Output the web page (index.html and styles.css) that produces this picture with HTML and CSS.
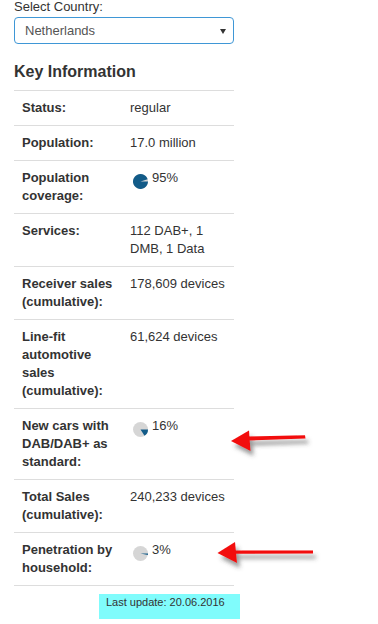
FILE: index.html
```html
<!DOCTYPE html>
<html>
<head>
<meta charset="utf-8">
<link rel="stylesheet" href="styles.css">
</head>
<body>
<div class="page">
  <div class="label">Select Country:</div>
  <div class="select"><span class="select-text">Netherlands</span><span class="caret"></span></div>
  <h3 class="heading">Key Information</h3>
  <table class="info">
    <colgroup><col class="c1"><col class="c2"></colgroup>
    <tr><th>Status:</th><td>regular</td></tr>
    <tr><th>Population:</th><td>17.0 million</td></tr>
    <tr><th>Population coverage:</th><td><svg class="pie" viewBox="0 0 15 15"><circle cx="7.5" cy="7.5" r="7.5" fill="#d6d6d6"/><path d="M7.5 7.5 L15 7.5 A7.5 7.5 0 1 1 14.63 5.18 Z" fill="#125b88"/></svg>95%</td></tr>
    <tr><th>Services:</th><td>112 DAB+, 1 DMB, 1 Data</td></tr>
    <tr><th>Receiver sales (cumulative):</th><td>178,609 devices</td></tr>
    <tr><th>Line-fit automotive sales (cumulative):</th><td>61,624 devices</td></tr>
    <tr><th>New cars with DAB/DAB+ as standard:</th><td><svg class="pie" viewBox="0 0 15 15"><circle cx="7.5" cy="7.5" r="7.5" fill="#d6d6d6"/><path d="M7.5 7.5 L15 7.5 A7.5 7.5 0 0 1 11.52 13.84 Z" fill="#125b88"/></svg>16%</td></tr>
    <tr><th>Total Sales (cumulative):</th><td>240,233 devices</td></tr>
    <tr><th>Penetration by household:</th><td><svg class="pie" viewBox="0 0 15 15"><circle cx="7.5" cy="7.5" r="7.5" fill="#d6d6d6"/><path d="M7.5 7.5 L15 7.5 A7.5 7.5 0 0 1 14.87 8.91 Z" fill="#125b88"/></svg>3%</td></tr>
  </table>
  <div class="update">Last update: 20.06.2016</div>
</div>
<svg class="arrows" width="378" height="624" viewBox="0 0 378 624">
  <defs>
    <filter id="sh" x="-20%" y="-50%" width="150%" height="250%">
      <feDropShadow dx="3" dy="5" stdDeviation="2" flood-color="#444" flood-opacity="0.55"/>
    </filter>
  </defs>
  <g fill="#f20c0c" filter="url(#sh)">
    <polygon points="248,436.6 305,435.2 305.5,438.6 248,440.6"/>
    <polygon points="231,441 249,430.5 250.5,451"/>
    <polygon points="235,550.5 313,550.5 313,553.6 235,553.8"/>
    <polygon points="217.5,553 235,542 237,563"/>
  </g>
</svg>
</body>
</html>
```

FILE: styles.css
```css
html, body {
  margin: 0;
  padding: 0;
  background: #fff;
}
body {
  font-family: "Liberation Sans", Arial, sans-serif;
  font-size: 13px;
  color: #333;
  width: 378px;
  height: 624px;
  overflow: hidden;
  position: relative;
}
.page {
  padding: 0 14px;
  width: 220px;
}
.label {
  line-height: 14px;
  height: 14px;
  margin-bottom: 3px;
}
.select {
  box-sizing: border-box;
  height: 27px;
  border: 1px solid #3f97d6;
  border-radius: 4px;
  padding: 4px 7px 3px 10px;
  display: flex;
  align-items: center;
  justify-content: space-between;
  line-height: 18px;
  color: #555;
  margin-bottom: 19px;
}
.select-text {
  line-height: 18px;
}
.caret {
  width: 0;
  height: 0;
  border-left: 3px solid transparent;
  border-right: 3px solid transparent;
  border-top: 5px solid #333;
  margin-top: 1px;
}
.heading {
  margin: 0 0 9px 0;
  font-size: 16px;
  line-height: 18px;
  font-weight: bold;
  color: #333;
}
.info {
  width: 220px;
  table-layout: fixed;
  border-collapse: collapse;
  border-bottom: 1px solid #ddd;
}
.c1 { width: 108px; }
.c2 { width: 112px; }
.info th, .info td {
  border-top: 1px solid #ddd;
  padding: 8px;
  line-height: 18px;
  vertical-align: top;
  text-align: left;
}
.info th {
  font-weight: bold;
}
.pie {
  width: 15px;
  height: 15px;
  vertical-align: -7px;
  margin-left: 3px;
  margin-right: 4px;
}
.update {
  box-sizing: border-box;
  margin: 8px 0 0 85px;
  width: 141px;
  height: 25px;
  padding: 2px 0 0 7px;
  background: #80fcfc;
  font-size: 11px;
  line-height: 13px;
  white-space: nowrap;
}
.arrows {
  position: absolute;
  left: 0;
  top: 0;
  pointer-events: none;
}
```
